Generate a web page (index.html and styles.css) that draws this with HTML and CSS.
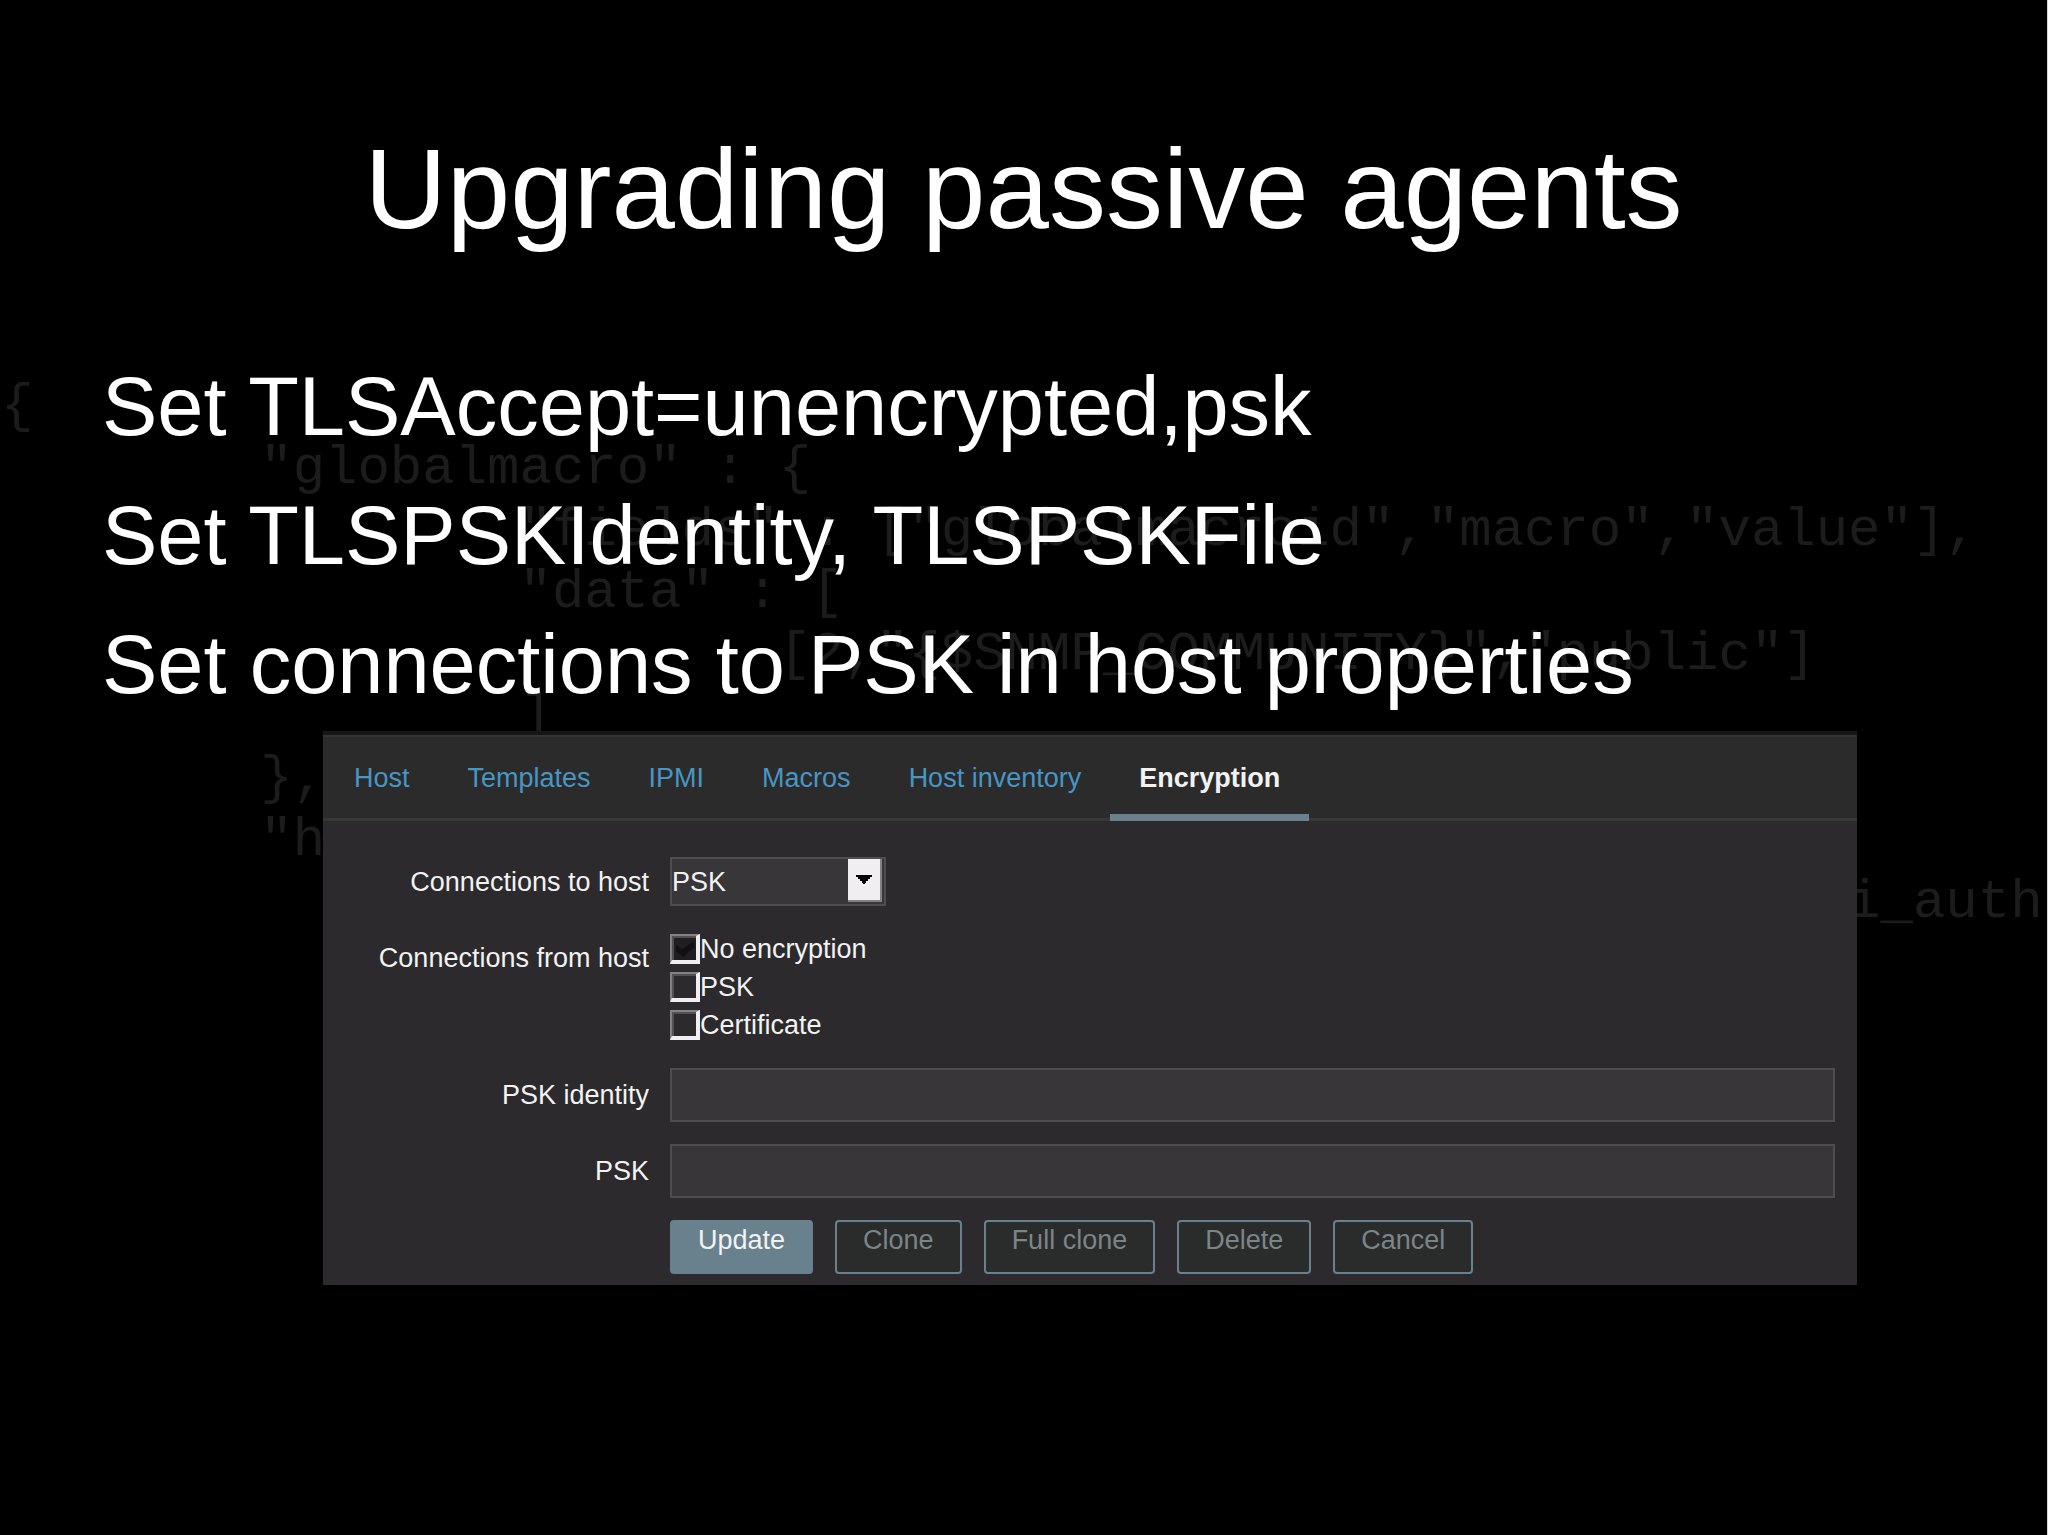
FILE: index.html
```
<!DOCTYPE html>
<html lang="en">
  <head>
    <meta charset="UTF-8" />
    <meta name="viewport" content="width=device-width, initial-scale=1.0" />
    <title>Upgrading passive agents</title>
    <link rel="stylesheet" href="styles.css" />
  </head>

  <body>
    <main class="slide">
      <!-- faint config dump behind the slide -->
      <pre class="code" aria-hidden="true">
{
	"globalmacro" : {
		"fields" : ["globalmacroid","macro","value"],
		"data" : [
			[2,"{$SNMP_COMMUNITY}","public"]
		]
	},
	"h
							 i_auth</pre>

      <h1>Upgrading passive agents</h1>

      <ul class="steps">
        <li>Set TLSAccept=unencrypted,psk</li>
        <li>Set TLSPSKIdentity, TLSPSKFile</li>
        <li>Set connections to PSK in host properties</li>
      </ul>

      <section class="panel">
        <nav class="tabs">
          <a href="#host">Host</a>
          <a href="#templates">Templates</a>
          <a href="#ipmi">IPMI</a>
          <a href="#macros">Macros</a>
          <a href="#inventory">Host inventory</a>
          <a href="#encryption" class="active">Encryption</a>
        </nav>

        <form class="form">
          <label for="connect">Connections to host</label>
          <div class="select">
            <select id="connect">
              <option>No encryption</option>
              <option selected>PSK</option>
              <option>Certificate</option>
            </select>
            <span class="arrow">
              <svg width="16" height="9" viewBox="0 0 16 9">
                <path d="M0 0h16v2h-2v2h-2v2h-2v2H9v1H7V8H6V6H4V4H2V2H0z" />
              </svg>
            </span>
          </div>

          <span class="top-label" id="accept">Connections from host</span>
          <div class="checks" role="group" aria-labelledby="accept">
            <label><input type="checkbox" checked />No encryption</label>
            <label><input type="checkbox" />PSK</label>
            <label><input type="checkbox" />Certificate</label>
          </div>

          <label for="identity">PSK identity</label>
          <input type="text" id="identity" />

          <label for="psk">PSK</label>
          <input type="text" id="psk" />

          <div class="buttons">
            <button type="button" class="primary">Update</button>
            <button type="button">Clone</button>
            <button type="button">Full clone</button>
            <button type="button">Delete</button>
            <button type="button">Cancel</button>
          </div>
        </form>
      </section>
    </main>
  </body>
</html>
```
FILE: styles.css
```
* {
  margin: 0;
  padding: 0;
  box-sizing: border-box;
}

body {
  background-color: #000;
  color: #fff;
  font-family: "Liberation Sans", Arial, sans-serif;
}

.slide {
  position: relative;
  min-height: 100vh;
  padding-top: 125px;
  border-right: 1px solid #d8dad6;
  overflow: hidden;
}

.code {
  position: absolute;
  top: 376px;
  left: 1px;
  color: #1c1c1c;
  font-family: "Liberation Mono", "Courier New", monospace;
  font-size: 54px;
  line-height: 62px;
  tab-size: 8;
}

h1 {
  position: relative;
  font-size: 114px;
  line-height: 128px;
  font-weight: normal;
  text-align: center;
}

.steps {
  position: relative;
  display: flex;
  flex-direction: column;
  gap: 36px;
  margin-top: 107px;
  padding-left: 102px;
  list-style: none;
  font-size: 83px;
  line-height: 93px;
}

.panel {
  position: relative;
  margin: 20px 190px 0 323px;
  border-top: 4px solid #161616;
  background-color: #2c2a2c;
  color: #f2f2f2;
  font-size: 27px;
  line-height: 32px;
}

.tabs {
  display: flex;
  padding-left: 2px;
  border-top: 2px solid #343434;
  border-bottom: 3px solid #383839;
  background-color: #2b2b2b;
}

.tabs a {
  margin-bottom: -3px;
  padding: 25px 29px 20px;
  border-bottom: 7px solid transparent;
  color: #4796c4;
  text-decoration: none;
}

.tabs .active {
  border-color: #69808d;
  color: #f2f2f2;
  font-weight: bold;
}

.form {
  display: grid;
  grid-template-columns: 304px 1fr;
  gap: 22px 21px;
  align-items: center;
  padding: 36px 22px 11px;
}

.form > label,
.top-label {
  text-align: right;
}

.top-label {
  align-self: start;
  padding-top: 14px;
}

.select {
  position: relative;
  width: 216px;
}

select {
  display: block;
  width: 100%;
  height: 49px;
  border: 2px solid #4f4d4f;
  border-radius: 0;
  background-color: #383638;
  color: #f2f2f2;
  font: inherit;
  appearance: none;
}

.arrow {
  position: absolute;
  top: 2px;
  right: 4px;
  bottom: 4px;
  width: 34px;
  display: flex;
  justify-content: center;
  align-items: center;
  border-right: 2px solid #848284;
  border-bottom: 2px solid #848284;
  background-color: #f0eef0;
  pointer-events: none;
}

.checks {
  padding: 2px 0;
}

.checks label {
  display: flex;
  align-items: center;
  height: 38px;
}

input[type="checkbox"] {
  width: 30px;
  height: 30px;
  border: 4px solid #f0eef0;
  border-top: 2px solid #848284;
  border-left: 2px solid #848284;
  background-color: #2c2a2c;
  box-shadow: inset 2px 2px #525052;
  appearance: none;
}

input[type="checkbox"]:checked {
  background-color: #201e20;
}

input[type="checkbox"]:checked::before {
  content: "";
  display: block;
  width: 18px;
  height: 16px;
  margin: 5px 4px;
  background-color: #121012;
  clip-path: polygon(0 25%, 35% 50%, 100% 0, 100% 40%, 40% 100%, 0 65%);
}

input[type="text"] {
  width: 100%;
  height: 54px;
  padding: 0 10px;
  border: 2px solid #4f4d4f;
  background-color: #383638;
  color: #f2f2f2;
  font: inherit;
}

.buttons {
  grid-column: 2;
  display: flex;
  gap: 22px;
}

button {
  height: 54px;
  padding: 0 26px 14px;
  border: 2px solid #69808d;
  border-radius: 4px;
  background-color: #2a2b2b;
  color: #7b8588;
  font: inherit;
}

.primary {
  background-color: #69808d;
  color: #f2f2f2;
}
```
